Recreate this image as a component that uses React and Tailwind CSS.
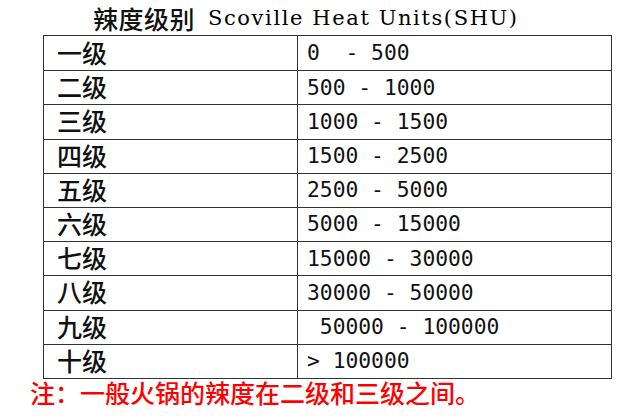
import React from "react";

const rows = [
  ["一级", "0  - 500"],
  ["二级", "500 - 1000"],
  ["三级", "1000 - 1500"],
  ["四级", "1500 - 2500"],
  ["五级", "2500 - 5000"],
  ["六级", "5000 - 15000"],
  ["七级", "15000 - 30000"],
  ["八级", "30000 - 50000"],
  ["九级", " 50000 - 100000"],
  ["十级", "> 100000"],
];

const cjk = "font-['Noto_Sans_CJK_SC',sans-serif]";
const mono = "font-['DejaVu_Sans_Mono','Liberation_Mono',monospace]";

export default function App() {
  return (
    <div className="w-[640px] h-[419px] bg-white text-[#111] overflow-hidden">
      {/* Title */}
      <div className="h-[35px] flex items-center pl-[93px] whitespace-pre">
        <span className={`${cjk} text-[25px] font-medium leading-[30px] tracking-[0.5px]`}>辣度级别</span>
        <span className="ml-[13px] font-['DejaVu_Serif',serif] text-[21px] leading-[30px] tracking-[1.6px] text-black">
          Scoville Heat Units(SHU)
        </span>
      </div>

      {/* Table */}
      <div className="ml-[43px] w-[569px] border border-[#333]">
        {rows.map(([level, range], i) => (
          <div
            key={i}
            className={`grid grid-cols-[254px_1fr] h-[34.2px] ${i > 0 ? "border-t border-[#333]" : ""}`}
          >
            <div className={`flex items-center pl-[13px] pb-[2px] border-r border-[#333] ${cjk} text-[25px] font-medium leading-none`}>
              {level}
            </div>
            <div className={`flex items-center pl-[9px] pb-[1px] whitespace-pre ${mono} text-[21.3px] leading-none`}>
              {range}
            </div>
          </div>
        ))}
      </div>

      {/* Note */}
      <div className={`h-[26px] flex items-center pl-[30px] ${cjk} text-[25px] font-medium text-[#f00] leading-[26px]`}>
        注：一般火锅的辣度在二级和三级之间。
      </div>
    </div>
  );
}
